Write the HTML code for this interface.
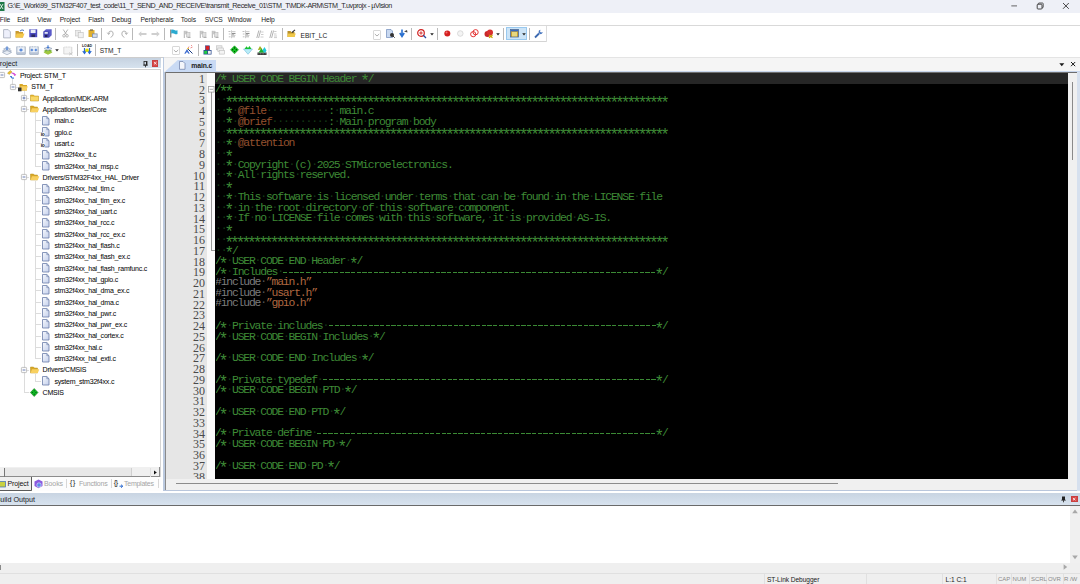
<!DOCTYPE html><html><head><meta charset="utf-8"><style>
*{margin:0;padding:0;box-sizing:border-box}
html,body{width:1080px;height:584px;overflow:hidden;background:#fff;font-family:"Liberation Sans",sans-serif}
.a{position:absolute}
svg.a{overflow:visible}
.t{white-space:pre;line-height:1.2}
.ln{position:absolute;left:0;width:39px;text-align:right;font-family:"Liberation Serif",serif;font-size:12px;line-height:10.75px;color:#4a4a4a}
.cl{position:absolute;left:-0.6px;white-space:pre;font-family:"Liberation Mono",monospace;font-size:11.4px;letter-spacing:-1.18px;line-height:10.75px;color:#3e8a36}
.dot{color:#143a16;position:relative;top:-1px}
.dotg{color:#555;position:relative;top:-1px}
.star{font-size:16px;letter-spacing:-3.94px;position:relative;top:4.6px;left:-1.9px}
.tag{color:#93502e}
.dash{display:inline-block;height:1px;background:repeating-linear-gradient(90deg,#3b8a35 0 4.3px,transparent 4.3px 5.66px);vertical-align:top;position:relative;top:5.5px;left:0.4px}
.pp{color:#7c7c7c}
.str{color:#b06840}
</style></head><body><svg width="0" height="0" style="position:absolute"><defs><linearGradient id="fg" x1="0" y1="0" x2="1" y2="1"><stop offset="0" stop-color="#f6f8fc"/><stop offset="1" stop-color="#c4d0ec"/></linearGradient></defs></svg><div class="a" style="left:0px;top:0px;width:1080px;height:12.5px;background:#eef0f7"></div><svg class="a" style="left:0px;top:2px" width="5" height="9" viewBox="0 0 5 9"><rect x="-4" y="0" width="8.5" height="9" fill="#1f7a48"/><path d="M0 2 L3 7 M3 2 L0 7" stroke="#fff" stroke-width="0.8"/></svg><div class="a t" style="left:7.4px;top:1.6px;font-size:7.2px;letter-spacing:-0.42px;color:#2a2a2a">G:\E_Work\99_STM32F407_test_code\11_T_SEND_AND_RECEIVE\transmit_Receive_01\STM_T\MDK-ARM\STM_T.uvprojx - µVision</div><svg class="a" style="left:1010px;top:3px" width="9" height="6" viewBox="0 0 9 6"><path d="M1.3 2.9 H7" stroke="#555" stroke-width="0.9"/></svg><svg class="a" style="left:1036px;top:2px" width="9" height="8" viewBox="0 0 9 8"><rect x="1.2" y="2.2" width="4.8" height="4.8" rx="0.8" fill="none" stroke="#333" stroke-width="0.9"/><path d="M2.4 2.2 V1.6 Q2.4 1 3 1 H6.5 Q7.2 1 7.2 1.7 V5 Q7.2 5.8 6.5 5.8 H6" fill="none" stroke="#333" stroke-width="0.8"/></svg><svg class="a" style="left:1062px;top:2px" width="8" height="8" viewBox="0 0 8 8"><path d="M1 1 L6.8 6.8 M6.8 1 L1 6.8" stroke="#333" stroke-width="0.9"/></svg><div class="a" style="left:0px;top:12.5px;width:1080px;height:12.8px;background:#fff"></div><div class="a" style="left:0px;top:25px;width:1080px;height:1px;background:#d9d9d9"></div><div class="a t" style="left:-0.3px;top:15.6px;font-size:6.7px;color:#1a1a1a;letter-spacing:-0.05px">File</div><div class="a t" style="left:17.2px;top:15.6px;font-size:6.7px;color:#1a1a1a;letter-spacing:-0.05px">Edit</div><div class="a t" style="left:37.2px;top:15.6px;font-size:6.7px;color:#1a1a1a;letter-spacing:-0.05px">View</div><div class="a t" style="left:59.7px;top:15.6px;font-size:6.7px;color:#1a1a1a;letter-spacing:-0.05px">Project</div><div class="a t" style="left:88.2px;top:15.6px;font-size:6.7px;color:#1a1a1a;letter-spacing:-0.05px">Flash</div><div class="a t" style="left:111.7px;top:15.6px;font-size:6.7px;color:#1a1a1a;letter-spacing:-0.05px">Debug</div><div class="a t" style="left:140.4px;top:15.6px;font-size:6.7px;color:#1a1a1a;letter-spacing:-0.05px">Peripherals</div><div class="a t" style="left:180.7px;top:15.6px;font-size:6.7px;color:#1a1a1a;letter-spacing:-0.05px">Tools</div><div class="a t" style="left:204.7px;top:15.6px;font-size:6.7px;color:#1a1a1a;letter-spacing:-0.05px">SVCS</div><div class="a t" style="left:227.7px;top:15.6px;font-size:6.7px;color:#1a1a1a;letter-spacing:-0.05px">Window</div><div class="a t" style="left:261.2px;top:15.6px;font-size:6.7px;color:#1a1a1a;letter-spacing:-0.05px">Help</div><div class="a" style="left:0px;top:26px;width:1080px;height:31px;background:#fff"></div><div class="a" style="left:0px;top:41.2px;width:546px;height:0.9px;background:#d4d4d4"></div><div class="a" style="left:546px;top:26px;width:0.9px;height:15.5px;background:#dcdcdc"></div><div class="a" style="left:0px;top:56.6px;width:269px;height:1px;background:#cdcdcd"></div><div class="a" style="left:269px;top:57.2px;width:811px;height:1px;background:#dedede"></div><div class="a" style="left:268.2px;top:41.5px;width:1.6px;height:15.5px;background:#eeeeee"></div><div class="a" style="left:55.3px;top:28.2px;width:0.9px;height:12px;background:#b9b9b9"></div><div class="a" style="left:100.5px;top:28.2px;width:0.9px;height:12px;background:#b9b9b9"></div><div class="a" style="left:132.3px;top:28.2px;width:0.9px;height:12px;background:#b9b9b9"></div><div class="a" style="left:163.7px;top:28.2px;width:0.9px;height:12px;background:#b9b9b9"></div><div class="a" style="left:222.6px;top:28.2px;width:0.9px;height:12px;background:#b9b9b9"></div><div class="a" style="left:281.5px;top:28.2px;width:0.9px;height:12px;background:#b9b9b9"></div><div class="a" style="left:411px;top:28.2px;width:0.9px;height:12px;background:#b9b9b9"></div><div class="a" style="left:437px;top:28.2px;width:0.9px;height:12px;background:#b9b9b9"></div><div class="a" style="left:503px;top:28.2px;width:0.9px;height:12px;background:#b9b9b9"></div><div class="a" style="left:528.5px;top:28.2px;width:0.9px;height:12px;background:#b9b9b9"></div><div class="a" style="left:77px;top:43.5px;width:0.9px;height:12px;background:#b9b9b9"></div><div class="a" style="left:94.8px;top:43.5px;width:0.9px;height:12px;background:#b9b9b9"></div><div class="a" style="left:197.5px;top:43.5px;width:0.9px;height:12px;background:#b9b9b9"></div><svg class="a" style="left:2.5px;top:28.8px" width="8" height="9.5" viewBox="0 0 8 9.5"><path d="M0.6 0.6 H5.2 L7.4 2.8 V8.9 H0.6 Z" fill="#eef0fb" stroke="#9aa0b0" stroke-width="0.7"/></svg><svg class="a" style="left:15px;top:28.8px" width="10" height="9" viewBox="0 0 10 9"><path d="M0.5 2 H3.5 L4.3 3 H8 V8.5 H0.5Z" fill="#c89a30"/><path d="M1.5 4.5 H9.5 L8 8.5 H0.5Z" fill="#f4c84a"/><path d="M5 2 Q7 0 9 1.5" stroke="#3a6ab8" stroke-width="0.9" fill="none"/></svg><svg class="a" style="left:29px;top:29.3px" width="8.5" height="8.5" viewBox="0 0 8.5 8.5"><rect x="0.3" y="0.3" width="7.9" height="7.9" fill="#4a4ac0"/><rect x="1.6" y="0.6" width="5" height="3.4" fill="#e8ecf8"/><rect x="2.4" y="5.4" width="3.6" height="2.6" fill="#2a2a60"/></svg><svg class="a" style="left:43px;top:29.1px" width="9" height="8.7" viewBox="0 0 9 8.7"><path d="M0.5 2.5 L3 0.3 H8.7 V6.3 L6.2 8.5 H0.5Z" fill="#5a5ac8"/><rect x="0.5" y="2.5" width="5.7" height="6" fill="#4646b0"/><rect x="1.6" y="3" width="3.2" height="1.8" fill="#dfe4f6"/><rect x="2" y="6" width="2.4" height="2" fill="#22225a"/></svg><svg class="a" style="left:62px;top:29.3px" width="7" height="8.5" viewBox="0 0 7 8.5"><path d="M1.2 0.5 L4.5 5.5 M5.8 0.5 L2.5 5.5" stroke="#a8a8a8" stroke-width="0.9"/><circle cx="2" cy="6.8" r="1.3" fill="none" stroke="#a8a8a8" stroke-width="0.8"/><circle cx="5" cy="6.8" r="1.3" fill="none" stroke="#a8a8a8" stroke-width="0.8"/></svg><svg class="a" style="left:74.5px;top:29.8px" width="9" height="8" viewBox="0 0 9 8"><rect x="0.5" y="0.5" width="5" height="5.5" fill="#ececec" stroke="#c4c4c4" stroke-width="0.6"/><rect x="3.2" y="2.5" width="5" height="5.3" fill="#f2f2f2" stroke="#bdbdbd" stroke-width="0.6"/></svg><svg class="a" style="left:88px;top:29.1px" width="10" height="9" viewBox="0 0 10 9"><rect x="0.5" y="1" width="6" height="7" fill="#e0b030"/><rect x="2" y="0.3" width="3" height="1.6" fill="#8a7a50"/><rect x="4" y="4.5" width="5.5" height="4.2" fill="#7a8aa8"/><rect x="4.8" y="5.3" width="4" height="2.6" fill="#d8e0ee"/></svg><svg class="a" style="left:106.5px;top:29.8px" width="7" height="8" viewBox="0 0 7 8"><path d="M1.5 4 Q1.5 1 4 1 Q6.2 1.2 6.2 4 Q6 6.5 3.6 7.4" stroke="#b4b4b4" stroke-width="1" fill="none"/><path d="M0.2 2.6 L1.6 4.6 L3 2.8" stroke="#b4b4b4" stroke-width="0.9" fill="none"/></svg><svg class="a" style="left:120.5px;top:29.8px" width="7" height="8" viewBox="0 0 7 8"><path d="M5.5 4 Q5.5 1 3 1 Q0.8 1.2 0.8 4 Q1 6.5 3.4 7.4" stroke="#b4b4b4" stroke-width="1" fill="none"/><path d="M6.8 2.6 L5.4 4.6 L4 2.8" stroke="#b4b4b4" stroke-width="0.9" fill="none"/></svg><svg class="a" style="left:137.5px;top:30.8px" width="9" height="6" viewBox="0 0 9 6"><path d="M0.3 3 L3.3 0.3 V1.9 H8.5 V4.1 H3.3 V5.7Z" fill="#cfcfcf"/></svg><svg class="a" style="left:150.5px;top:30.8px" width="9" height="6" viewBox="0 0 9 6"><path d="M8.7 3 L5.7 0.3 V1.9 H0.5 V4.1 H5.7 V5.7Z" fill="#cfcfcf"/></svg><svg class="a" style="left:169.5px;top:29.3px" width="8" height="9" viewBox="0 0 8 9"><path d="M0.8 0.5 V8.5" stroke="#555" stroke-width="0.9"/><path d="M1.2 0.8 Q3 0 4.5 1 Q6 2 7.5 1.2 V5 Q6 5.8 4.5 4.8 Q3 3.8 1.2 4.6Z" fill="#2aaad0"/></svg><svg class="a" style="left:183px;top:29.6px" width="8" height="8.5" viewBox="0 0 8 8.5"><path d="M1.3 0.8 V8" stroke="#a8a8a8" stroke-width="0.9"/><path d="M1.6 1 Q3 0.3 4.5 1 V4.5 Q3 3.8 1.6 4.5Z" fill="#c8c8c8"/><rect x="3.5" y="2.5" width="3.5" height="4.5" fill="#e0e0e0" stroke="#b0b0b0" stroke-width="0.5"/><path d="M4.5 7.5 H7.5" stroke="#a0a0a0" stroke-width="0.8"/></svg><svg class="a" style="left:198.5px;top:29.6px" width="8" height="8.5" viewBox="0 0 8 8.5"><path d="M1.3 0.8 V8" stroke="#a8a8a8" stroke-width="0.9"/><path d="M1.6 1 Q3 0.3 4.5 1 V4.5 Q3 3.8 1.6 4.5Z" fill="#c8c8c8"/><rect x="3.5" y="2.5" width="3.5" height="4.5" fill="#e0e0e0" stroke="#b0b0b0" stroke-width="0.5"/><path d="M4.5 7.5 H7.5" stroke="#a0a0a0" stroke-width="0.8"/></svg><svg class="a" style="left:211px;top:29.6px" width="8" height="8.5" viewBox="0 0 8 8.5"><path d="M1.3 0.8 V8" stroke="#a8a8a8" stroke-width="0.9"/><path d="M1.6 1 Q3 0.3 4.5 1 V4.5 Q3 3.8 1.6 4.5Z" fill="#c8c8c8"/><rect x="3.5" y="2.5" width="3.5" height="4.5" fill="#e0e0e0" stroke="#b0b0b0" stroke-width="0.5"/><path d="M4.5 7.5 H7.5" stroke="#a0a0a0" stroke-width="0.8"/></svg><svg class="a" style="left:228px;top:29.8px" width="8" height="8.5" viewBox="0 0 8 8.5"><path d="M3.5 0.3 V8.2" stroke="#b8b8b8" stroke-width="0.7"/><path d="M4 1.5 H7.5 M4 5.5 H7.5" stroke="#c8c8c8" stroke-width="0.9"/><path d="M4 3.5 H7.5" stroke="#909090" stroke-width="1.2"/><path d="M4 4.6 H6 M4 6.8 H7" stroke="#a8a8a8" stroke-width="0.8"/><path d="M0.5 1.5 H2.5 M0.8 4 H2.5 M0.8 6.8 H2.5" stroke="#b0b0b0" stroke-width="0.8"/></svg><svg class="a" style="left:241.5px;top:29.8px" width="8" height="8.5" viewBox="0 0 8 8.5"><path d="M3.5 0.3 V8.2" stroke="#b8b8b8" stroke-width="0.7"/><path d="M4 1.5 H7.5 M4 5.5 H7.5" stroke="#c8c8c8" stroke-width="0.9"/><path d="M4 3.5 H7.5" stroke="#909090" stroke-width="1.2"/><path d="M4 4.6 H6 M4 6.8 H7" stroke="#a8a8a8" stroke-width="0.8"/><path d="M0.5 1.5 H2.5 M0.8 4 H2.5 M0.8 6.8 H2.5" stroke="#b0b0b0" stroke-width="0.8"/></svg><svg class="a" style="left:255.5px;top:29.8px" width="8" height="8.5" viewBox="0 0 8 8.5"><path d="M2.8 0.5 L0.8 8 M4.6 0.5 L2.6 8" stroke="#a0a0a0" stroke-width="0.8"/><path d="M5.2 2 H7.5 M5 4.5 H7.5 M4.5 7 H7.5" stroke="#b8b8b8" stroke-width="0.7"/></svg><svg class="a" style="left:269px;top:29.8px" width="9" height="8.5" viewBox="0 0 9 8.5"><path d="M2.8 0.5 L0.8 8 M4.6 0.5 L2.6 8" stroke="#a0a0a0" stroke-width="0.8"/><path d="M5.2 1.5 H7.5 M5 4 H7.5 M5 6 H8 M5 7.6 H8" stroke="#b8b8b8" stroke-width="0.7"/></svg><svg class="a" style="left:287px;top:29.3px" width="9" height="8.5" viewBox="0 0 9 8.5"><path d="M0.5 2 H3.5 L4.3 3 H7.5 V8 H0.5Z" fill="#b8902a"/><path d="M0.8 4.5 H8.8 L7.5 8 H0.5Z" fill="#f0c848"/><path d="M5 3.5 L8 0.8" stroke="#333" stroke-width="1.1"/></svg><div class="a t" style="left:300.5px;top:31.8px;font-size:6.6px;color:#1a1a1a">EBIT_LC</div><div class="a" style="left:372.8px;top:30px;width:8.4px;height:9.5px;border:0.8px solid #d8d8d8;background:#fff;border-radius:1px"></div><svg class="a" style="left:374px;top:32.5px" width="6" height="4" viewBox="0 0 6 4"><path d="M0.8 1 L3 3 L5.2 1" stroke="#777" stroke-width="0.6" fill="none"/></svg><svg class="a" style="left:386px;top:29.1px" width="9" height="9" viewBox="0 0 9 9"><path d="M0.5 0.5 H5 L6.5 2 V8.5 H0.5Z" fill="#c8d8f0" stroke="#5a7ab0" stroke-width="0.6"/><circle cx="6" cy="6" r="2" fill="#333"/><path d="M6.5 6.5 L8.7 8.7" stroke="#333" stroke-width="1"/></svg><svg class="a" style="left:399px;top:29.1px" width="9" height="9" viewBox="0 0 9 9"><path d="M3 0.5 V6 M0.8 4 L3 7.5 L5.2 4" stroke="#2a70d0" stroke-width="1.6" fill="none"/><path d="M5 2.5 L8 1 L8.5 3.5Z" fill="#444"/></svg><svg class="a" style="left:417px;top:28.8px" width="10" height="9.5" viewBox="0 0 10 9.5"><circle cx="4" cy="4" r="3.3" fill="#fff" stroke="#d02020" stroke-width="1.2"/><path d="M2.3 4 H5.7 M4 2.3 V5.7" stroke="#d02020" stroke-width="0.9"/><path d="M6.3 6.3 L9 9" stroke="#2a4aa0" stroke-width="1.3"/></svg><svg class="a" style="left:429.5px;top:33px" width="4" height="3" viewBox="0 0 4 3"><path d="M0.2 0.3 H3.8 L2 2.6Z" fill="#222"/></svg><svg class="a" style="left:444px;top:29.8px" width="7" height="7" viewBox="0 0 7 7"><circle cx="3.3" cy="3.5" r="3" fill="#d42020"/><circle cx="2.5" cy="2.5" r="1" fill="#f07070"/></svg><svg class="a" style="left:457px;top:29.8px" width="7" height="7" viewBox="0 0 7 7"><circle cx="3.3" cy="3.5" r="2.8" fill="#f4f4f4" stroke="#c8c8c8" stroke-width="0.6"/></svg><svg class="a" style="left:470px;top:29.3px" width="9" height="8.5" viewBox="0 0 9 8.5"><circle cx="3.2" cy="5.2" r="2.6" fill="none" stroke="#e02020" stroke-width="0.9"/><circle cx="5.6" cy="3.2" r="2.6" fill="none" stroke="#e02020" stroke-width="0.9"/></svg><svg class="a" style="left:484px;top:29.1px" width="10" height="9" viewBox="0 0 10 9"><circle cx="3.5" cy="5" r="3" fill="#c82828"/><circle cx="6" cy="3.5" r="3" fill="#d83030"/><path d="M5 6 L8.5 8.8 M8.5 6 L5 8.8" stroke="#c8a000" stroke-width="1.1"/></svg><svg class="a" style="left:495.8px;top:33px" width="4" height="3" viewBox="0 0 4 3"><path d="M0.2 0.3 H3.8 L2 2.6Z" fill="#222"/></svg><div class="a" style="left:506px;top:27.3px;width:21.2px;height:13px;background:#cce4f7;border:0.8px solid #99c9ef"></div><svg class="a" style="left:509.5px;top:29.3px" width="9" height="8.5" viewBox="0 0 9 8.5"><rect x="0.5" y="0.5" width="8" height="7.5" fill="#c9a030" stroke="#4a6aa0" stroke-width="0.8"/><rect x="0.9" y="0.9" width="7.2" height="1.5" fill="#3a6ac0"/><rect x="2" y="3" width="5" height="4.4" fill="#e8d880"/></svg><svg class="a" style="left:521.5px;top:33px" width="4" height="3" viewBox="0 0 4 3"><path d="M0.2 0.3 H3.8 L2 2.6Z" fill="#222"/></svg><svg class="a" style="left:534px;top:28.8px" width="9.5" height="9.5" viewBox="0 0 9.5 9.5"><path d="M1 8.5 L5 4.5" stroke="#3a68b0" stroke-width="1.8"/><path d="M4.5 3.5 Q4.3 1 6.5 0.7 L6 2.5 L7 3.5 L8.8 3 Q8.5 5.2 6 5.2Z" fill="#4a78c0"/></svg><svg class="a" style="left:2px;top:45.5px" width="10" height="9.5" viewBox="0 0 10 9.5"><path d="M0.5 5 L5 3 L9.5 5 L5 7Z" fill="#dfe5ef" stroke="#8090a8" stroke-width="0.5"/><path d="M0.5 6.5 L5 4.5 L9.5 6.5 L5 8.8Z" fill="#e8edf5" stroke="#8090a8" stroke-width="0.5"/><path d="M1.5 3 L5 1.3 L8.5 3 L5 4.8Z" fill="#f0f3f8" stroke="#8090a8" stroke-width="0.5"/><path d="M5 0.3 V3.5 M3.6 2.3 L5 3.6 L6.4 2.3" stroke="#2a6ad0" stroke-width="0.9" fill="none"/></svg><svg class="a" style="left:15.5px;top:45.5px" width="10" height="9" viewBox="0 0 10 9"><path d="M0.8 0.5 V8.3 H9.2 V0.5" stroke="#8a9ab0" stroke-width="0.8" fill="#eef2f8"/><path d="M1.5 0.8 H8.5" stroke="#8a9ab0" stroke-width="0.8" stroke-dasharray="1 0.6"/><rect x="0.8" y="6.2" width="8.4" height="2" fill="#b8c4d6"/><path d="M3.3 4 H6.7 M5 2.5 V5.5" stroke="#2a6ad0" stroke-width="1"/></svg><svg class="a" style="left:29px;top:45.5px" width="10" height="9" viewBox="0 0 10 9"><path d="M0.8 0.5 V8.3 H9.2 V0.5" stroke="#8a9ab0" stroke-width="0.8" fill="#eef2f8"/><path d="M1.5 0.8 H8.5" stroke="#8a9ab0" stroke-width="0.8" stroke-dasharray="1 0.6"/><rect x="0.8" y="6.2" width="8.4" height="2" fill="#b8c4d6"/><path d="M1.6 4 H4.2 M2.9 2.7 V5.3 M5.6 4 H8.2 M6.9 2.7 V5.3" stroke="#2a6ad0" stroke-width="0.9"/></svg><svg class="a" style="left:43px;top:45px" width="10" height="10" viewBox="0 0 10 10"><path d="M0.5 6 L5 4 L9.5 6 L5 8.2Z" fill="#70b030"/><path d="M0.5 7.5 L5 5.5 L9.5 7.5 L5 9.7Z" fill="#a0c840"/><path d="M1 3.5 L5 1.8 L9 3.5 L5 5.5Z" fill="#d8dde8" stroke="#8090a8" stroke-width="0.5"/><path d="M5 0.2 V3.2 M3.8 2 L5 3.3 L6.2 2" stroke="#2a6ad0" stroke-width="0.9" fill="none"/></svg><svg class="a" style="left:55px;top:49.3px" width="4" height="3" viewBox="0 0 4 3"><path d="M0.2 0.3 H3.8 L2 2.6Z" fill="#222"/></svg><svg class="a" style="left:63px;top:45.5px" width="10" height="9.5" viewBox="0 0 10 9.5"><path d="M0.8 1 V8 H8.8 V1" stroke="#c8c8c8" stroke-width="0.7" fill="#f4f4f4"/><path d="M1.5 1 H8.3" stroke="#c8c8c8" stroke-width="0.8" stroke-dasharray="1 0.6"/><path d="M6 6.5 L9.5 9.2 M9.5 6.5 L6 9.2" stroke="#c0c0c0" stroke-width="0.7"/></svg><svg class="a" style="left:81.5px;top:44px" width="10" height="11" viewBox="0 0 10 11"><text x="5" y="3.3" font-size="3.6" font-family="Liberation Sans" font-weight="bold" text-anchor="middle" fill="#222">LOAD</text><path d="M2.5 4 V8.5 M0.8 7 L2.5 9.5 L4.2 7 M7.5 4 V8.5 M5.8 7 L7.5 9.5 L9.2 7" stroke="#2a6ad0" stroke-width="1.2" fill="none"/><circle cx="5" cy="6.3" r="1.8" fill="#e0e000"/></svg><div class="a t" style="left:99.7px;top:47.2px;font-size:6.6px;color:#1a1a1a">STM_T</div><div class="a" style="left:172px;top:45.8px;width:8.4px;height:9.5px;border:0.8px solid #d8d8d8;background:#fff;border-radius:1px"></div><svg class="a" style="left:173.2px;top:48.5px" width="6" height="4" viewBox="0 0 6 4"><path d="M0.8 1 L3 3 L5.2 1" stroke="#777" stroke-width="0.6" fill="none"/></svg><svg class="a" style="left:184px;top:45px" width="10" height="10" viewBox="0 0 10 10"><path d="M0.8 8.8 L3 5 L5.2 8.8 M1.8 7 H4.2" stroke="#3a6ad0" stroke-width="1.1" fill="none"/><path d="M4 4 L8.5 8.5" stroke="#1a3a80" stroke-width="1"/><path d="M4 3.5 L5 1.5 M6.5 3 L8.5 2 M7 0.8 L8 0.3" stroke="#e04040" stroke-width="0.6"/><circle cx="4" cy="3.6" r="0.8" fill="#e8c020"/></svg><svg class="a" style="left:203px;top:45px" width="9" height="10" viewBox="0 0 9 10"><rect x="0.5" y="5" width="8" height="4.5" fill="#2a4a90"/><rect x="1.2" y="5.8" width="3" height="3" fill="#20d040"/><rect x="5" y="5.8" width="2.8" height="3" fill="#f0f0f0"/><rect x="2.4" y="0.8" width="4.2" height="4.2" fill="#e02020" stroke="#2a4a90" stroke-width="0.6"/></svg><svg class="a" style="left:216px;top:45px" width="9" height="10" viewBox="0 0 9 10"><rect x="0.5" y="0.8" width="5.5" height="4" fill="#ececec" stroke="#bbb" stroke-width="0.6"/><rect x="1.8" y="3" width="5.5" height="3.5" fill="#f0f0f0" stroke="#bbb" stroke-width="0.6"/><rect x="3.2" y="5.3" width="5.3" height="3.8" fill="#f4f4f4" stroke="#bbb" stroke-width="0.6"/></svg><svg class="a" style="left:230px;top:45px" width="9" height="10" viewBox="0 0 9 10"><path d="M4.5 0.8 L8.5 4.8 L4.5 8.8 L0.5 4.8Z" fill="#10d020" stroke="#0a7a10" stroke-width="0.5"/><circle cx="4.5" cy="3" r="0.7" fill="#0a2a0a"/><circle cx="4.5" cy="6.6" r="0.7" fill="#0a2a0a"/><circle cx="2.7" cy="4.8" r="0.7" fill="#0a2a0a"/><circle cx="6.3" cy="4.8" r="0.7" fill="#0a2a0a"/></svg><svg class="a" style="left:243px;top:45px" width="10" height="10" viewBox="0 0 10 10"><path d="M0.5 4 H9.5 L5 9.3Z" fill="#b8ecf8" stroke="#5ab0d0" stroke-width="0.5"/><path d="M1.5 4 L3.5 1.2 L5 3 L6.5 1 L8.5 4Z" fill="#18c030"/></svg><svg class="a" style="left:257px;top:44.5px" width="10" height="10.5" viewBox="0 0 10 10.5"><rect x="0.5" y="7.5" width="9" height="2.5" fill="#333"/><path d="M0.8 5 L3 1 L5.5 4.5Z" fill="#a0b020"/><path d="M5 6 L7.5 2 L9.5 5.5 L8 8Z" fill="#20c8d8"/><path d="M1.5 7.5 L4.5 3.5 L7 7.5Z" fill="#18b030"/><path d="M1.5 8.8 H8.5" stroke="#fff" stroke-width="0.5" stroke-dasharray="0.8 0.8"/></svg><div class="a" style="left:0px;top:57.5px;width:160.8px;height:10px;background:linear-gradient(#c6d2e0,#d6e2ee)"></div><div class="a" style="left:0px;top:67.5px;width:160.8px;height:1.6px;background:#fff"></div><div class="a" style="left:0px;top:69.1px;width:160.5px;height:0.9px;background:#d0d0d0"></div><div class="a t" style="left:-5px;top:59.8px;font-size:7.2px;color:#1a1a1a">Project</div><svg class="a" style="left:142.5px;top:60.5px" width="5" height="6.5" viewBox="0 0 5 6.5"><rect x="1" y="0.5" width="3" height="3.5" fill="none" stroke="#222" stroke-width="0.8"/><path d="M0.3 4.2 H4.7 M2.5 4.2 V6.3" stroke="#222" stroke-width="0.8"/><rect x="3" y="0.5" width="1" height="3.5" fill="#222"/></svg><div class="a" style="left:151.8px;top:60.4px;width:6.6px;height:6.4px;background:#d84848;border:0.5px solid #c84040"></div><svg class="a" style="left:151.8px;top:60.4px" width="6.6" height="6.4" viewBox="0 0 6.6 6.4"><path d="M2 2 L4.6 4.4 M4.6 2 L2 4.4" stroke="#fff" stroke-width="0.8"/></svg><div class="a" style="left:0px;top:70px;width:160.5px;height:397.2px;background:#fff"></div><div class="a" style="left:160px;top:69.1px;width:0.9px;height:408px;background:#d4d4d4"></div><div class="a" style="left:12.2px;top:78.2px;width:0.8px;height:6.32px;background:#dcdcdc"></div><div class="a" style="left:23.7px;top:89.52px;width:0.8px;height:302.64px;background:#dcdcdc"></div><div class="a" style="left:35.3px;top:113.16px;width:0.8px;height:52.6px;background:#dcdcdc"></div><div class="a" style="left:35.3px;top:120.48px;width:6px;height:0.8px;background:#dcdcdc"></div><div class="a" style="left:35.3px;top:131.8px;width:6px;height:0.8px;background:#dcdcdc"></div><div class="a" style="left:35.3px;top:143.12px;width:6px;height:0.8px;background:#dcdcdc"></div><div class="a" style="left:35.3px;top:154.44px;width:6px;height:0.8px;background:#dcdcdc"></div><div class="a" style="left:35.3px;top:165.76px;width:6px;height:0.8px;background:#dcdcdc"></div><div class="a" style="left:35.3px;top:181.08px;width:0.8px;height:177.12px;background:#dcdcdc"></div><div class="a" style="left:35.3px;top:188.4px;width:6px;height:0.8px;background:#dcdcdc"></div><div class="a" style="left:35.3px;top:199.72px;width:6px;height:0.8px;background:#dcdcdc"></div><div class="a" style="left:35.3px;top:211.04px;width:6px;height:0.8px;background:#dcdcdc"></div><div class="a" style="left:35.3px;top:222.36px;width:6px;height:0.8px;background:#dcdcdc"></div><div class="a" style="left:35.3px;top:233.68px;width:6px;height:0.8px;background:#dcdcdc"></div><div class="a" style="left:35.3px;top:245px;width:6px;height:0.8px;background:#dcdcdc"></div><div class="a" style="left:35.3px;top:256.32px;width:6px;height:0.8px;background:#dcdcdc"></div><div class="a" style="left:35.3px;top:267.64px;width:6px;height:0.8px;background:#dcdcdc"></div><div class="a" style="left:35.3px;top:278.96px;width:6px;height:0.8px;background:#dcdcdc"></div><div class="a" style="left:35.3px;top:290.28px;width:6px;height:0.8px;background:#dcdcdc"></div><div class="a" style="left:35.3px;top:301.6px;width:6px;height:0.8px;background:#dcdcdc"></div><div class="a" style="left:35.3px;top:312.92px;width:6px;height:0.8px;background:#dcdcdc"></div><div class="a" style="left:35.3px;top:324.24px;width:6px;height:0.8px;background:#dcdcdc"></div><div class="a" style="left:35.3px;top:335.56px;width:6px;height:0.8px;background:#dcdcdc"></div><div class="a" style="left:35.3px;top:346.88px;width:6px;height:0.8px;background:#dcdcdc"></div><div class="a" style="left:35.3px;top:358.2px;width:6px;height:0.8px;background:#dcdcdc"></div><div class="a" style="left:35.3px;top:373.52px;width:0.8px;height:7.32px;background:#dcdcdc"></div><div class="a" style="left:35.3px;top:380.84px;width:6px;height:0.8px;background:#dcdcdc"></div><div class="a" style="left:13px;top:86.52px;width:5px;height:0.8px;background:#dcdcdc"></div><div class="a" style="left:24px;top:97.84px;width:5px;height:0.8px;background:#dcdcdc"></div><div class="a" style="left:24px;top:109.16px;width:5px;height:0.8px;background:#dcdcdc"></div><div class="a" style="left:24px;top:177.08px;width:5px;height:0.8px;background:#dcdcdc"></div><div class="a" style="left:24px;top:369.52px;width:5px;height:0.8px;background:#dcdcdc"></div><div class="a" style="left:24px;top:392.16px;width:5px;height:0.8px;background:#dcdcdc"></div><div class="a t" style="left:20px;top:72.1px;font-size:7px;letter-spacing:-0.2px;color:#0a0a0a;-webkit-text-stroke:0.05px #0a0a0a">Project: STM_T</div><svg class="a" style="left:-1.2px;top:72.2px" width="6" height="6" viewBox="0 0 6 6"><rect x="0.4" y="0.4" width="5.2" height="5.2" rx="0.8" fill="#fbfbfb" stroke="#a8a8a8" stroke-width="0.7"/><path d="M1.6 3 H4.4" stroke="#4a62a8" stroke-width="0.8"/></svg><svg class="a" style="left:6.5px;top:70.2px" width="9.5" height="9.5" viewBox="0 0 9.5 9.5"><path d="M0.5 3 L3.5 0.5 L5 2 L2 4.5Z" fill="#e8c030" stroke="#a88010" stroke-width="0.4"/><path d="M4.5 3 Q8 3 8 5.5" stroke="#d040d0" stroke-width="1.2" fill="none"/><path d="M7.8 5.5 L6.5 4.5 M7.8 5.5 L8.8 4.2" stroke="#d040d0" stroke-width="0.8"/><path d="M7 8 Q4 8.5 4 6" stroke="#3a7ad8" stroke-width="1.2" fill="none"/><path d="M4 6 L3 7 M4 6 L5 7" stroke="#3a7ad8" stroke-width="0.8"/></svg><div class="a t" style="left:31.3px;top:83.42px;font-size:7px;letter-spacing:-0.2px;color:#0a0a0a;-webkit-text-stroke:0.05px #0a0a0a">STM_T</div><svg class="a" style="left:10.1px;top:83.52px" width="6" height="6" viewBox="0 0 6 6"><rect x="0.4" y="0.4" width="5.2" height="5.2" rx="0.8" fill="#fbfbfb" stroke="#a8a8a8" stroke-width="0.7"/><path d="M1.6 3 H4.4" stroke="#4a62a8" stroke-width="0.8"/></svg><svg class="a" style="left:18px;top:82.52px" width="10" height="8.5" viewBox="0 0 10 8.5"><path d="M1.5 1 H4.5 L5.3 2 H9 V7.5 H1.5Z" fill="#d8a828"/><path d="M2.5 3.3 H9.8 L8.5 7.5 H1.5Z" fill="#f8d060"/><rect x="0" y="4.5" width="3.5" height="3.8" fill="#333"/></svg><div class="a t" style="left:42.6px;top:94.74px;font-size:7px;letter-spacing:-0.2px;color:#0a0a0a;-webkit-text-stroke:0.05px #0a0a0a">Application/MDK-ARM</div><svg class="a" style="left:21.4px;top:94.84px" width="6" height="6" viewBox="0 0 6 6"><rect x="0.4" y="0.4" width="5.2" height="5.2" rx="0.8" fill="#fbfbfb" stroke="#a8a8a8" stroke-width="0.7"/><path d="M1.6 3 H4.4" stroke="#4a62a8" stroke-width="0.8"/><path d="M3 1.6 V4.4" stroke="#4a62a8" stroke-width="0.8"/></svg><svg class="a" style="left:30px;top:94.04px" width="9" height="7.5" viewBox="0 0 9 7.5"><path d="M0.5 1 H3.5 L4.3 2 H8.5 V7 H0.5Z" fill="#e8b830" stroke="#b8901c" stroke-width="0.5"/><rect x="0.9" y="2.6" width="7.2" height="4" fill="#f8d868"/></svg><div class="a t" style="left:42.6px;top:106.06px;font-size:7px;letter-spacing:-0.2px;color:#0a0a0a;-webkit-text-stroke:0.05px #0a0a0a">Application/User/Core</div><svg class="a" style="left:21.4px;top:106.16px" width="6" height="6" viewBox="0 0 6 6"><rect x="0.4" y="0.4" width="5.2" height="5.2" rx="0.8" fill="#fbfbfb" stroke="#a8a8a8" stroke-width="0.7"/><path d="M1.6 3 H4.4" stroke="#4a62a8" stroke-width="0.8"/></svg><svg class="a" style="left:30px;top:105.36px" width="9.5" height="7.5" viewBox="0 0 9.5 7.5"><path d="M0.5 1 H3.5 L4.3 2 H7.5 V7 H0.5Z" fill="#d8a828" stroke="#b8901c" stroke-width="0.5"/><path d="M2 3.3 H9.3 L7.8 7 H0.5Z" fill="#f8d060"/></svg><div class="a t" style="left:54.4px;top:117.38px;font-size:7px;letter-spacing:-0.2px;color:#0a0a0a;-webkit-text-stroke:0.05px #0a0a0a">main.c</div><svg class="a" style="left:42px;top:115.68px" width="7.5" height="9.5" viewBox="0 0 7.5 9.5"><path d="M0.5 0.5 H4.8 L7 2.7 V9 H0.5Z" fill="url(#fg)" stroke="#6a7ca8" stroke-width="0.8"/><path d="M4.8 0.5 V2.7 H7" fill="none" stroke="#6a7ca8" stroke-width="0.6"/></svg><div class="a t" style="left:54.4px;top:128.7px;font-size:7px;letter-spacing:-0.2px;color:#0a0a0a;-webkit-text-stroke:0.05px #0a0a0a">gpio.c</div><svg class="a" style="left:42px;top:127px" width="7.5" height="9.5" viewBox="0 0 7.5 9.5"><path d="M0.5 0.5 H4.8 L7 2.7 V9 H0.5Z" fill="url(#fg)" stroke="#6a7ca8" stroke-width="0.8"/><path d="M4.8 0.5 V2.7 H7" fill="none" stroke="#6a7ca8" stroke-width="0.6"/></svg><svg class="a" style="left:40px;top:132.1px" width="6" height="5" viewBox="0 0 6 5"><rect x="0.3" y="0.3" width="4.8" height="4.4" fill="#fff" opacity="0.9"/><text x="2.7" y="4.4" font-size="5" font-family="Liberation Sans" font-weight="bold" text-anchor="middle" fill="#111" letter-spacing="-0.3">io</text></svg><div class="a t" style="left:54.4px;top:140.02px;font-size:7px;letter-spacing:-0.2px;color:#0a0a0a;-webkit-text-stroke:0.05px #0a0a0a">usart.c</div><svg class="a" style="left:42px;top:138.32px" width="7.5" height="9.5" viewBox="0 0 7.5 9.5"><path d="M0.5 0.5 H4.8 L7 2.7 V9 H0.5Z" fill="url(#fg)" stroke="#6a7ca8" stroke-width="0.8"/><path d="M4.8 0.5 V2.7 H7" fill="none" stroke="#6a7ca8" stroke-width="0.6"/></svg><svg class="a" style="left:40px;top:143.42px" width="6" height="5" viewBox="0 0 6 5"><rect x="0.3" y="0.3" width="4.8" height="4.4" fill="#fff" opacity="0.9"/><text x="2.7" y="4.4" font-size="5" font-family="Liberation Sans" font-weight="bold" text-anchor="middle" fill="#111" letter-spacing="-0.3">io</text></svg><div class="a t" style="left:54.4px;top:151.34px;font-size:7px;letter-spacing:-0.2px;color:#0a0a0a;-webkit-text-stroke:0.05px #0a0a0a">stm32f4xx_it.c</div><svg class="a" style="left:42px;top:149.64px" width="7.5" height="9.5" viewBox="0 0 7.5 9.5"><path d="M0.5 0.5 H4.8 L7 2.7 V9 H0.5Z" fill="url(#fg)" stroke="#6a7ca8" stroke-width="0.8"/><path d="M4.8 0.5 V2.7 H7" fill="none" stroke="#6a7ca8" stroke-width="0.6"/></svg><div class="a t" style="left:54.4px;top:162.66px;font-size:7px;letter-spacing:-0.2px;color:#0a0a0a;-webkit-text-stroke:0.05px #0a0a0a">stm32f4xx_hal_msp.c</div><svg class="a" style="left:42px;top:160.96px" width="7.5" height="9.5" viewBox="0 0 7.5 9.5"><path d="M0.5 0.5 H4.8 L7 2.7 V9 H0.5Z" fill="url(#fg)" stroke="#6a7ca8" stroke-width="0.8"/><path d="M4.8 0.5 V2.7 H7" fill="none" stroke="#6a7ca8" stroke-width="0.6"/></svg><div class="a t" style="left:42.6px;top:173.98px;font-size:7px;letter-spacing:-0.2px;color:#0a0a0a;-webkit-text-stroke:0.05px #0a0a0a">Drivers/STM32F4xx_HAL_Driver</div><svg class="a" style="left:21.4px;top:174.08px" width="6" height="6" viewBox="0 0 6 6"><rect x="0.4" y="0.4" width="5.2" height="5.2" rx="0.8" fill="#fbfbfb" stroke="#a8a8a8" stroke-width="0.7"/><path d="M1.6 3 H4.4" stroke="#4a62a8" stroke-width="0.8"/></svg><svg class="a" style="left:30px;top:173.28px" width="9.5" height="7.5" viewBox="0 0 9.5 7.5"><path d="M0.5 1 H3.5 L4.3 2 H7.5 V7 H0.5Z" fill="#d8a828" stroke="#b8901c" stroke-width="0.5"/><path d="M2 3.3 H9.3 L7.8 7 H0.5Z" fill="#f8d060"/></svg><div class="a t" style="left:54.4px;top:185.3px;font-size:7px;letter-spacing:-0.2px;color:#0a0a0a;-webkit-text-stroke:0.05px #0a0a0a">stm32f4xx_hal_tim.c</div><svg class="a" style="left:42px;top:183.6px" width="7.5" height="9.5" viewBox="0 0 7.5 9.5"><path d="M0.5 0.5 H4.8 L7 2.7 V9 H0.5Z" fill="url(#fg)" stroke="#6a7ca8" stroke-width="0.8"/><path d="M4.8 0.5 V2.7 H7" fill="none" stroke="#6a7ca8" stroke-width="0.6"/></svg><div class="a t" style="left:54.4px;top:196.62px;font-size:7px;letter-spacing:-0.2px;color:#0a0a0a;-webkit-text-stroke:0.05px #0a0a0a">stm32f4xx_hal_tim_ex.c</div><svg class="a" style="left:42px;top:194.92px" width="7.5" height="9.5" viewBox="0 0 7.5 9.5"><path d="M0.5 0.5 H4.8 L7 2.7 V9 H0.5Z" fill="url(#fg)" stroke="#6a7ca8" stroke-width="0.8"/><path d="M4.8 0.5 V2.7 H7" fill="none" stroke="#6a7ca8" stroke-width="0.6"/></svg><div class="a t" style="left:54.4px;top:207.94px;font-size:7px;letter-spacing:-0.2px;color:#0a0a0a;-webkit-text-stroke:0.05px #0a0a0a">stm32f4xx_hal_uart.c</div><svg class="a" style="left:42px;top:206.24px" width="7.5" height="9.5" viewBox="0 0 7.5 9.5"><path d="M0.5 0.5 H4.8 L7 2.7 V9 H0.5Z" fill="url(#fg)" stroke="#6a7ca8" stroke-width="0.8"/><path d="M4.8 0.5 V2.7 H7" fill="none" stroke="#6a7ca8" stroke-width="0.6"/></svg><div class="a t" style="left:54.4px;top:219.26px;font-size:7px;letter-spacing:-0.2px;color:#0a0a0a;-webkit-text-stroke:0.05px #0a0a0a">stm32f4xx_hal_rcc.c</div><svg class="a" style="left:42px;top:217.56px" width="7.5" height="9.5" viewBox="0 0 7.5 9.5"><path d="M0.5 0.5 H4.8 L7 2.7 V9 H0.5Z" fill="url(#fg)" stroke="#6a7ca8" stroke-width="0.8"/><path d="M4.8 0.5 V2.7 H7" fill="none" stroke="#6a7ca8" stroke-width="0.6"/></svg><div class="a t" style="left:54.4px;top:230.58px;font-size:7px;letter-spacing:-0.2px;color:#0a0a0a;-webkit-text-stroke:0.05px #0a0a0a">stm32f4xx_hal_rcc_ex.c</div><svg class="a" style="left:42px;top:228.88px" width="7.5" height="9.5" viewBox="0 0 7.5 9.5"><path d="M0.5 0.5 H4.8 L7 2.7 V9 H0.5Z" fill="url(#fg)" stroke="#6a7ca8" stroke-width="0.8"/><path d="M4.8 0.5 V2.7 H7" fill="none" stroke="#6a7ca8" stroke-width="0.6"/></svg><div class="a t" style="left:54.4px;top:241.9px;font-size:7px;letter-spacing:-0.2px;color:#0a0a0a;-webkit-text-stroke:0.05px #0a0a0a">stm32f4xx_hal_flash.c</div><svg class="a" style="left:42px;top:240.2px" width="7.5" height="9.5" viewBox="0 0 7.5 9.5"><path d="M0.5 0.5 H4.8 L7 2.7 V9 H0.5Z" fill="url(#fg)" stroke="#6a7ca8" stroke-width="0.8"/><path d="M4.8 0.5 V2.7 H7" fill="none" stroke="#6a7ca8" stroke-width="0.6"/></svg><div class="a t" style="left:54.4px;top:253.22px;font-size:7px;letter-spacing:-0.2px;color:#0a0a0a;-webkit-text-stroke:0.05px #0a0a0a">stm32f4xx_hal_flash_ex.c</div><svg class="a" style="left:42px;top:251.52px" width="7.5" height="9.5" viewBox="0 0 7.5 9.5"><path d="M0.5 0.5 H4.8 L7 2.7 V9 H0.5Z" fill="url(#fg)" stroke="#6a7ca8" stroke-width="0.8"/><path d="M4.8 0.5 V2.7 H7" fill="none" stroke="#6a7ca8" stroke-width="0.6"/></svg><div class="a t" style="left:54.4px;top:264.54px;font-size:7px;letter-spacing:-0.2px;color:#0a0a0a;-webkit-text-stroke:0.05px #0a0a0a">stm32f4xx_hal_flash_ramfunc.c</div><svg class="a" style="left:42px;top:262.84px" width="7.5" height="9.5" viewBox="0 0 7.5 9.5"><path d="M0.5 0.5 H4.8 L7 2.7 V9 H0.5Z" fill="url(#fg)" stroke="#6a7ca8" stroke-width="0.8"/><path d="M4.8 0.5 V2.7 H7" fill="none" stroke="#6a7ca8" stroke-width="0.6"/></svg><div class="a t" style="left:54.4px;top:275.86px;font-size:7px;letter-spacing:-0.2px;color:#0a0a0a;-webkit-text-stroke:0.05px #0a0a0a">stm32f4xx_hal_gpio.c</div><svg class="a" style="left:42px;top:274.16px" width="7.5" height="9.5" viewBox="0 0 7.5 9.5"><path d="M0.5 0.5 H4.8 L7 2.7 V9 H0.5Z" fill="url(#fg)" stroke="#6a7ca8" stroke-width="0.8"/><path d="M4.8 0.5 V2.7 H7" fill="none" stroke="#6a7ca8" stroke-width="0.6"/></svg><div class="a t" style="left:54.4px;top:287.18px;font-size:7px;letter-spacing:-0.2px;color:#0a0a0a;-webkit-text-stroke:0.05px #0a0a0a">stm32f4xx_hal_dma_ex.c</div><svg class="a" style="left:42px;top:285.48px" width="7.5" height="9.5" viewBox="0 0 7.5 9.5"><path d="M0.5 0.5 H4.8 L7 2.7 V9 H0.5Z" fill="url(#fg)" stroke="#6a7ca8" stroke-width="0.8"/><path d="M4.8 0.5 V2.7 H7" fill="none" stroke="#6a7ca8" stroke-width="0.6"/></svg><div class="a t" style="left:54.4px;top:298.5px;font-size:7px;letter-spacing:-0.2px;color:#0a0a0a;-webkit-text-stroke:0.05px #0a0a0a">stm32f4xx_hal_dma.c</div><svg class="a" style="left:42px;top:296.8px" width="7.5" height="9.5" viewBox="0 0 7.5 9.5"><path d="M0.5 0.5 H4.8 L7 2.7 V9 H0.5Z" fill="url(#fg)" stroke="#6a7ca8" stroke-width="0.8"/><path d="M4.8 0.5 V2.7 H7" fill="none" stroke="#6a7ca8" stroke-width="0.6"/></svg><div class="a t" style="left:54.4px;top:309.82px;font-size:7px;letter-spacing:-0.2px;color:#0a0a0a;-webkit-text-stroke:0.05px #0a0a0a">stm32f4xx_hal_pwr.c</div><svg class="a" style="left:42px;top:308.12px" width="7.5" height="9.5" viewBox="0 0 7.5 9.5"><path d="M0.5 0.5 H4.8 L7 2.7 V9 H0.5Z" fill="url(#fg)" stroke="#6a7ca8" stroke-width="0.8"/><path d="M4.8 0.5 V2.7 H7" fill="none" stroke="#6a7ca8" stroke-width="0.6"/></svg><div class="a t" style="left:54.4px;top:321.14px;font-size:7px;letter-spacing:-0.2px;color:#0a0a0a;-webkit-text-stroke:0.05px #0a0a0a">stm32f4xx_hal_pwr_ex.c</div><svg class="a" style="left:42px;top:319.44px" width="7.5" height="9.5" viewBox="0 0 7.5 9.5"><path d="M0.5 0.5 H4.8 L7 2.7 V9 H0.5Z" fill="url(#fg)" stroke="#6a7ca8" stroke-width="0.8"/><path d="M4.8 0.5 V2.7 H7" fill="none" stroke="#6a7ca8" stroke-width="0.6"/></svg><div class="a t" style="left:54.4px;top:332.46px;font-size:7px;letter-spacing:-0.2px;color:#0a0a0a;-webkit-text-stroke:0.05px #0a0a0a">stm32f4xx_hal_cortex.c</div><svg class="a" style="left:42px;top:330.76px" width="7.5" height="9.5" viewBox="0 0 7.5 9.5"><path d="M0.5 0.5 H4.8 L7 2.7 V9 H0.5Z" fill="url(#fg)" stroke="#6a7ca8" stroke-width="0.8"/><path d="M4.8 0.5 V2.7 H7" fill="none" stroke="#6a7ca8" stroke-width="0.6"/></svg><div class="a t" style="left:54.4px;top:343.78px;font-size:7px;letter-spacing:-0.2px;color:#0a0a0a;-webkit-text-stroke:0.05px #0a0a0a">stm32f4xx_hal.c</div><svg class="a" style="left:42px;top:342.08px" width="7.5" height="9.5" viewBox="0 0 7.5 9.5"><path d="M0.5 0.5 H4.8 L7 2.7 V9 H0.5Z" fill="url(#fg)" stroke="#6a7ca8" stroke-width="0.8"/><path d="M4.8 0.5 V2.7 H7" fill="none" stroke="#6a7ca8" stroke-width="0.6"/></svg><div class="a t" style="left:54.4px;top:355.1px;font-size:7px;letter-spacing:-0.2px;color:#0a0a0a;-webkit-text-stroke:0.05px #0a0a0a">stm32f4xx_hal_exti.c</div><svg class="a" style="left:42px;top:353.4px" width="7.5" height="9.5" viewBox="0 0 7.5 9.5"><path d="M0.5 0.5 H4.8 L7 2.7 V9 H0.5Z" fill="url(#fg)" stroke="#6a7ca8" stroke-width="0.8"/><path d="M4.8 0.5 V2.7 H7" fill="none" stroke="#6a7ca8" stroke-width="0.6"/></svg><div class="a t" style="left:42.6px;top:366.42px;font-size:7px;letter-spacing:-0.2px;color:#0a0a0a;-webkit-text-stroke:0.05px #0a0a0a">Drivers/CMSIS</div><svg class="a" style="left:21.4px;top:366.52px" width="6" height="6" viewBox="0 0 6 6"><rect x="0.4" y="0.4" width="5.2" height="5.2" rx="0.8" fill="#fbfbfb" stroke="#a8a8a8" stroke-width="0.7"/><path d="M1.6 3 H4.4" stroke="#4a62a8" stroke-width="0.8"/></svg><svg class="a" style="left:30px;top:365.72px" width="9.5" height="7.5" viewBox="0 0 9.5 7.5"><path d="M0.5 1 H3.5 L4.3 2 H7.5 V7 H0.5Z" fill="#d8a828" stroke="#b8901c" stroke-width="0.5"/><path d="M2 3.3 H9.3 L7.8 7 H0.5Z" fill="#f8d060"/></svg><div class="a t" style="left:54.4px;top:377.74px;font-size:7px;letter-spacing:-0.2px;color:#0a0a0a;-webkit-text-stroke:0.05px #0a0a0a">system_stm32f4xx.c</div><svg class="a" style="left:42px;top:376.04px" width="7.5" height="9.5" viewBox="0 0 7.5 9.5"><path d="M0.5 0.5 H4.8 L7 2.7 V9 H0.5Z" fill="url(#fg)" stroke="#6a7ca8" stroke-width="0.8"/><path d="M4.8 0.5 V2.7 H7" fill="none" stroke="#6a7ca8" stroke-width="0.6"/></svg><div class="a t" style="left:42.6px;top:389.06px;font-size:7px;letter-spacing:-0.2px;color:#0a0a0a;-webkit-text-stroke:0.05px #0a0a0a">CMSIS</div><svg class="a" style="left:29.5px;top:387.66px" width="8.5" height="9" viewBox="0 0 8.5 9"><path d="M4.2 0.5 L8 4.5 L4.2 8.5 L0.4 4.5Z" fill="#10c020" stroke="#086010" stroke-width="0.5"/><circle cx="4.2" cy="2.8" r="0.6" fill="#042"/><circle cx="4.2" cy="6.2" r="0.6" fill="#042"/><circle cx="2.5" cy="4.5" r="0.6" fill="#042"/><circle cx="5.9" cy="4.5" r="0.6" fill="#042"/></svg><div class="a" style="left:0px;top:467.2px;width:160px;height:9.6px;background:#f0f0f0"></div><div class="a" style="left:4.3px;top:467.5px;width:127.7px;height:9px;background:#e8e8e8;border-right:0.8px solid #d0d0d0"></div><div class="a" style="left:0px;top:476.2px;width:160px;height:0.9px;background:#8c8c8c"></div><div class="a" style="left:4.2px;top:467.5px;width:0.8px;height:9px;background:#777"></div><div class="a" style="left:149.6px;top:467.5px;width:0.6px;height:9px;background:#e0e0e0"></div><svg class="a" style="left:152.5px;top:469.5px" width="5" height="5" viewBox="0 0 5 5"><path d="M1 0.5 L3.8 2.5 L1 4.5Z" fill="#111"/></svg><div class="a" style="left:159.3px;top:467.2px;width:0.9px;height:10px;background:#8a8a8a"></div><div class="a" style="left:0px;top:477.1px;width:160.5px;height:13.5px;background:#fdfdfd"></div><div class="a" style="left:0px;top:477.1px;width:32.2px;height:13.6px;background:#f0f0f0;border-right:1px solid #5a5a5a;border-bottom:1px solid #5a5a5a;border-bottom-right-radius:1.5px"></div><svg class="a" style="left:0px;top:480.5px" width="6" height="6" viewBox="0 0 6 6"><rect x="-2" y="0.5" width="7.5" height="5.5" fill="#c8d040" stroke="#3a6ab8" stroke-width="0.7"/></svg><div class="a t" style="left:7.5px;top:480.4px;font-size:7px;color:#111;letter-spacing:-0.1px">Project</div><svg class="a" style="left:33.5px;top:479.2px" width="10" height="10" viewBox="0 0 10 10"><path d="M4.5 0.5 L8.5 2.5 V7 L4.5 9.3 L0.5 7 V2.5Z" fill="#8a5ae0"/><circle cx="5" cy="6" r="2.2" fill="#5a8ae8" stroke="#fff" stroke-width="0.5"/></svg><div class="a t" style="left:44px;top:480.4px;font-size:7px;color:#a4a4a4;letter-spacing:-0.1px">Books</div><div class="a" style="left:65.5px;top:479px;width:0.8px;height:9px;background:#d8d8d8"></div><div class="a t" style="left:69.8px;top:478.2px;font-size:8px;color:#333;letter-spacing:0.3px">{}</div><div class="a t" style="left:79px;top:480.4px;font-size:7px;color:#a4a4a4;letter-spacing:-0.2px">Functions</div><div class="a" style="left:111px;top:479px;width:0.8px;height:9px;background:#d8d8d8"></div><div class="a t" style="left:113.8px;top:478.2px;font-size:8px;color:#333;letter-spacing:-1px">{}</div><svg class="a" style="left:118.5px;top:484px" width="4.5" height="4.5" viewBox="0 0 4.5 4.5"><path d="M0.5 2.2 H3.5 M2 0.7 L3.8 2.2 L2 3.7" stroke="#2a6ad0" stroke-width="1" fill="none"/></svg><div class="a t" style="left:124px;top:480.4px;font-size:7px;color:#a4a4a4;letter-spacing:-0.25px">Templates</div><div class="a" style="left:157.5px;top:479px;width:0.8px;height:9px;background:#d8d8d8"></div><div class="a" style="left:160.6px;top:57.5px;width:2.5px;height:436px;background:#fff"></div><div class="a" style="left:163px;top:57px;width:917px;height:433.5px;background:#f0f0f0"></div><div class="a" style="left:163px;top:57px;width:2.2px;height:433.5px;background:#bccadf"></div><div class="a" style="left:163px;top:489.6px;width:917px;height:1.2px;background:#b9c6dc"></div><div class="a" style="left:1077.3px;top:72px;width:2.7px;height:418.5px;background:#d6e0ee"></div><div class="a" style="left:164.3px;top:57.3px;width:915.7px;height:14.9px;background:#f5f5f5"></div><div class="a" style="left:164.3px;top:57.3px;width:915.7px;height:0.8px;background:#e4e4e4"></div><div class="a" style="left:216px;top:71.2px;width:864px;height:0.9px;background:#c8d6ec"></div><div class="a" style="left:164.3px;top:59.6px;width:52px;height:12.6px;background:#c9daf4;clip-path:polygon(14px 0,100% 0,100% 100%,0 100%)"></div><svg class="a" style="left:179px;top:60.5px" width="7" height="9" viewBox="0 0 7 9"><path d="M0.5 0.5 H4 L6 2.5 V8.3 H0.5Z" fill="#f4f6fb" stroke="#6a7ca8" stroke-width="0.7"/></svg><div class="a t" style="left:191.3px;top:61.6px;font-size:6.8px;font-weight:bold;color:#1a1a1a;letter-spacing:-0.1px">main.c</div><svg class="a" style="left:1058.8px;top:62.8px" width="6" height="4" viewBox="0 0 6 4"><path d="M0.3 0.3 H5.3 L2.8 3.3Z" fill="#1a1a1a"/></svg><svg class="a" style="left:1069.5px;top:61.3px" width="6.5" height="6.5" viewBox="0 0 6.5 6.5"><path d="M1 1 L5.2 5.2 M5.2 1 L1 5.2" stroke="#1a1a1a" stroke-width="1"/></svg><div class="a" style="left:165px;top:72px;width:912.3px;height:1px;background:#6e6e6e"></div><div class="a" style="left:165px;top:72px;width:1px;height:418px;background:#8a8a8a"></div><div class="a" style="left:166px;top:73px;width:41px;height:405.5px;background:#e6e6e6"></div><div class="a" style="left:206.8px;top:73px;width:8.8px;height:405.5px;background:#fafafa"></div><div class="a" style="left:215.4px;top:73px;width:852.3px;height:405.5px;background:#000"></div><div class="a" style="left:215.4px;top:73.1px;width:852.3px;height:10.8px;background:#262626"></div><svg class="a" style="left:207.8px;top:85.8px" width="7" height="7" viewBox="0 0 7 7"><rect x="0.5" y="0.5" width="5.6" height="5.6" fill="#fff" stroke="#9a9a9a" stroke-width="0.8"/><path d="M1.6 3.3 H5" stroke="#8a8a8a" stroke-width="0.7"/></svg><div class="a" style="left:211px;top:92.2px;width:0.9px;height:158.3px;background:#9a9a9a"></div><div class="a" style="left:211px;top:249.8px;width:3.5px;height:0.9px;background:#9a9a9a"></div><div class="a" style="left:1071.8px;top:81.7px;width:1px;height:78px;background:#8a8a8a"></div><div class="a" style="left:175.5px;top:483.1px;width:662px;height:1px;background:#8c8c8c"></div><div class="a" style="left:166px;top:72px;width:40px;height:406.5px;overflow:hidden"><div class="ln" style="top:1.90px">1</div><div class="ln" style="top:12.65px">2</div><div class="ln" style="top:23.40px">3</div><div class="ln" style="top:34.15px">4</div><div class="ln" style="top:44.90px">5</div><div class="ln" style="top:55.65px">6</div><div class="ln" style="top:66.40px">7</div><div class="ln" style="top:77.15px">8</div><div class="ln" style="top:87.90px">9</div><div class="ln" style="top:98.65px">10</div><div class="ln" style="top:109.40px">11</div><div class="ln" style="top:120.15px">12</div><div class="ln" style="top:130.90px">13</div><div class="ln" style="top:141.65px">14</div><div class="ln" style="top:152.40px">15</div><div class="ln" style="top:163.15px">16</div><div class="ln" style="top:173.90px">17</div><div class="ln" style="top:184.65px">18</div><div class="ln" style="top:195.40px">19</div><div class="ln" style="top:206.15px">20</div><div class="ln" style="top:216.90px">21</div><div class="ln" style="top:227.65px">22</div><div class="ln" style="top:238.40px">23</div><div class="ln" style="top:249.15px">24</div><div class="ln" style="top:259.90px">25</div><div class="ln" style="top:270.65px">26</div><div class="ln" style="top:281.40px">27</div><div class="ln" style="top:292.15px">28</div><div class="ln" style="top:302.90px">29</div><div class="ln" style="top:313.65px">30</div><div class="ln" style="top:324.40px">31</div><div class="ln" style="top:335.15px">32</div><div class="ln" style="top:345.90px">33</div><div class="ln" style="top:356.65px">34</div><div class="ln" style="top:367.40px">35</div><div class="ln" style="top:378.15px">36</div><div class="ln" style="top:388.90px">37</div><div class="ln" style="top:399.65px">38</div></div><div class="a" style="left:215.6px;top:72px;width:852px;height:406.5px;overflow:hidden"><div class="cl" style="top:0.70px"><span class="c">/</span><span class="star">*</span><span class="dot">·</span><span class="c">USER</span><span class="dot">·</span><span class="c">CODE</span><span class="dot">·</span><span class="c">BEGIN</span><span class="dot">·</span><span class="c">Header</span><span class="dot">·</span><span class="star">*</span><span class="c">/</span></div><div class="cl" style="top:11.45px"><span class="c">/</span><span class="star">**</span></div><div class="cl" style="top:22.20px"><span class="dot">··</span><span class="star">******************************************************************************</span></div><div class="cl" style="top:32.95px"><span class="dot">··</span><span class="star">*</span><span class="dot">·</span><span class="tag">@file</span><span class="dot">···········</span><span class="c">:</span><span class="dot">·</span><span class="c">main.c</span></div><div class="cl" style="top:43.70px"><span class="dot">··</span><span class="star">*</span><span class="dot">·</span><span class="tag">@brief</span><span class="dot">··········</span><span class="c">:</span><span class="dot">·</span><span class="c">Main</span><span class="dot">·</span><span class="c">program</span><span class="dot">·</span><span class="c">body</span></div><div class="cl" style="top:54.45px"><span class="dot">··</span><span class="star">******************************************************************************</span></div><div class="cl" style="top:65.20px"><span class="dot">··</span><span class="star">*</span><span class="dot">·</span><span class="tag">@attention</span></div><div class="cl" style="top:75.95px"><span class="dot">··</span><span class="star">*</span></div><div class="cl" style="top:86.70px"><span class="dot">··</span><span class="star">*</span><span class="dot">·</span><span class="c">Copyright</span><span class="dot">·</span><span class="c">(c)</span><span class="dot">·</span><span class="c">2025</span><span class="dot">·</span><span class="c">STMicroelectronics.</span></div><div class="cl" style="top:97.45px"><span class="dot">··</span><span class="star">*</span><span class="dot">·</span><span class="c">All</span><span class="dot">·</span><span class="c">rights</span><span class="dot">·</span><span class="c">reserved.</span></div><div class="cl" style="top:108.20px"><span class="dot">··</span><span class="star">*</span></div><div class="cl" style="top:118.95px"><span class="dot">··</span><span class="star">*</span><span class="dot">·</span><span class="c">This</span><span class="dot">·</span><span class="c">software</span><span class="dot">·</span><span class="c">is</span><span class="dot">·</span><span class="c">licensed</span><span class="dot">·</span><span class="c">under</span><span class="dot">·</span><span class="c">terms</span><span class="dot">·</span><span class="c">that</span><span class="dot">·</span><span class="c">can</span><span class="dot">·</span><span class="c">be</span><span class="dot">·</span><span class="c">found</span><span class="dot">·</span><span class="c">in</span><span class="dot">·</span><span class="c">the</span><span class="dot">·</span><span class="c">LICENSE</span><span class="dot">·</span><span class="c">file</span></div><div class="cl" style="top:129.70px"><span class="dot">··</span><span class="star">*</span><span class="dot">·</span><span class="c">in</span><span class="dot">·</span><span class="c">the</span><span class="dot">·</span><span class="c">root</span><span class="dot">·</span><span class="c">directory</span><span class="dot">·</span><span class="c">of</span><span class="dot">·</span><span class="c">this</span><span class="dot">·</span><span class="c">software</span><span class="dot">·</span><span class="c">component.</span></div><div class="cl" style="top:140.45px"><span class="dot">··</span><span class="star">*</span><span class="dot">·</span><span class="c">If</span><span class="dot">·</span><span class="c">no</span><span class="dot">·</span><span class="c">LICENSE</span><span class="dot">·</span><span class="c">file</span><span class="dot">·</span><span class="c">comes</span><span class="dot">·</span><span class="c">with</span><span class="dot">·</span><span class="c">this</span><span class="dot">·</span><span class="c">software,</span><span class="dot">·</span><span class="c">it</span><span class="dot">·</span><span class="c">is</span><span class="dot">·</span><span class="c">provided</span><span class="dot">·</span><span class="c">AS-IS.</span></div><div class="cl" style="top:151.20px"><span class="dot">··</span><span class="star">*</span></div><div class="cl" style="top:161.95px"><span class="dot">··</span><span class="star">******************************************************************************</span></div><div class="cl" style="top:172.70px"><span class="dot">··</span><span class="star">*</span><span class="c">/</span></div><div class="cl" style="top:183.45px"><span class="c">/</span><span class="star">*</span><span class="dot">·</span><span class="c">USER</span><span class="dot">·</span><span class="c">CODE</span><span class="dot">·</span><span class="c">END</span><span class="dot">·</span><span class="c">Header</span><span class="dot">·</span><span class="star">*</span><span class="c">/</span></div><div class="cl" style="top:194.20px"><span class="c">/</span><span class="star">*</span><span class="dot">·</span><span class="c">Includes</span><span class="dot">·</span><span class="dash" style="width:373.56px"></span><span class="star">*</span><span class="c">/</span></div><div class="cl" style="top:204.95px"><span class="pp">#include</span><span class="dotg">·</span><span class="str">”main.h”</span></div><div class="cl" style="top:215.70px"><span class="pp">#include</span><span class="dotg">·</span><span class="str">”usart.h”</span></div><div class="cl" style="top:226.45px"><span class="pp">#include</span><span class="dotg">·</span><span class="str">”gpio.h”</span></div><div class="cl" style="top:247.95px"><span class="c">/</span><span class="star">*</span><span class="dot">·</span><span class="c">Private</span><span class="dot">·</span><span class="c">includes</span><span class="dot">·</span><span class="dash" style="width:328.28px"></span><span class="star">*</span><span class="c">/</span></div><div class="cl" style="top:258.70px"><span class="c">/</span><span class="star">*</span><span class="dot">·</span><span class="c">USER</span><span class="dot">·</span><span class="c">CODE</span><span class="dot">·</span><span class="c">BEGIN</span><span class="dot">·</span><span class="c">Includes</span><span class="dot">·</span><span class="star">*</span><span class="c">/</span></div><div class="cl" style="top:280.20px"><span class="c">/</span><span class="star">*</span><span class="dot">·</span><span class="c">USER</span><span class="dot">·</span><span class="c">CODE</span><span class="dot">·</span><span class="c">END</span><span class="dot">·</span><span class="c">Includes</span><span class="dot">·</span><span class="star">*</span><span class="c">/</span></div><div class="cl" style="top:301.70px"><span class="c">/</span><span class="star">*</span><span class="dot">·</span><span class="c">Private</span><span class="dot">·</span><span class="c">typedef</span><span class="dot">·</span><span class="dash" style="width:333.94px"></span><span class="star">*</span><span class="c">/</span></div><div class="cl" style="top:312.45px"><span class="c">/</span><span class="star">*</span><span class="dot">·</span><span class="c">USER</span><span class="dot">·</span><span class="c">CODE</span><span class="dot">·</span><span class="c">BEGIN</span><span class="dot">·</span><span class="c">PTD</span><span class="dot">·</span><span class="star">*</span><span class="c">/</span></div><div class="cl" style="top:333.95px"><span class="c">/</span><span class="star">*</span><span class="dot">·</span><span class="c">USER</span><span class="dot">·</span><span class="c">CODE</span><span class="dot">·</span><span class="c">END</span><span class="dot">·</span><span class="c">PTD</span><span class="dot">·</span><span class="star">*</span><span class="c">/</span></div><div class="cl" style="top:355.45px"><span class="c">/</span><span class="star">*</span><span class="dot">·</span><span class="c">Private</span><span class="dot">·</span><span class="c">define</span><span class="dot">·</span><span class="dash" style="width:339.60px"></span><span class="star">*</span><span class="c">/</span></div><div class="cl" style="top:366.20px"><span class="c">/</span><span class="star">*</span><span class="dot">·</span><span class="c">USER</span><span class="dot">·</span><span class="c">CODE</span><span class="dot">·</span><span class="c">BEGIN</span><span class="dot">·</span><span class="c">PD</span><span class="dot">·</span><span class="star">*</span><span class="c">/</span></div><div class="cl" style="top:387.70px"><span class="c">/</span><span class="star">*</span><span class="dot">·</span><span class="c">USER</span><span class="dot">·</span><span class="c">CODE</span><span class="dot">·</span><span class="c">END</span><span class="dot">·</span><span class="c">PD</span><span class="dot">·</span><span class="star">*</span><span class="c">/</span></div></div><div class="a" style="left:0px;top:490.7px;width:1080px;height:2.5px;background:#fff"></div><div class="a" style="left:0px;top:493.2px;width:1080px;height:11.8px;background:linear-gradient(#c8d4e2,#d8e3ef)"></div><div class="a" style="left:0px;top:504.8px;width:1080px;height:1.2px;background:#6a6a6a"></div><div class="a t" style="left:-4.6px;top:496.3px;font-size:7.2px;color:#1a1a1a">Build Output</div><svg class="a" style="left:1060.5px;top:496px" width="5" height="6.5" viewBox="0 0 5 6.5"><rect x="1" y="0.5" width="3" height="3.5" fill="#222"/><path d="M0.3 4.2 H4.7 M2.5 4.2 V6.3" stroke="#222" stroke-width="0.8"/></svg><div class="a" style="left:1071.4px;top:495.8px;width:6.4px;height:6.3px;background:#d84848;border:0.5px solid #c84040"></div><svg class="a" style="left:1071.4px;top:495.8px" width="6.4" height="6.3" viewBox="0 0 6.4 6.3"><path d="M2 2 L4.4 4.3 M4.4 2 L2 4.3" stroke="#fff" stroke-width="0.8"/></svg><div class="a" style="left:0px;top:505.7px;width:1069.6px;height:57.5px;background:#fff"></div><div class="a" style="left:1069.6px;top:505.7px;width:10.4px;height:57.5px;background:#f0f0f0"></div><svg class="a" style="left:1071.5px;top:508.5px" width="6" height="5" viewBox="0 0 6 5"><path d="M0.2 4.2 L3 0.6 L5.8 4.2Z" fill="#a8a8a8"/></svg><svg class="a" style="left:1071.5px;top:555px" width="6" height="5" viewBox="0 0 6 5"><path d="M0.2 0.6 L3 4.2 L5.8 0.6Z" fill="#a8a8a8"/></svg><div class="a" style="left:0px;top:563px;width:1080px;height:10px;background:#efefef"></div><svg class="a" style="left:1063px;top:564.3px" width="5" height="6" viewBox="0 0 5 6"><path d="M0.6 0.3 L4.2 3 L0.6 5.7Z" fill="#a8a8a8"/></svg><div class="a" style="left:0px;top:573px;width:1080px;height:1px;background:#e0e0e0"></div><div class="a" style="left:0px;top:565px;width:1.2px;height:5px;background:#8a8a8a"></div><div class="a" style="left:0px;top:574px;width:1080px;height:10px;background:#efefef"></div><div class="a" style="left:764.4px;top:574.4px;width:0.8px;height:9.6px;background:#e0e0e0"></div><div class="a" style="left:865.6px;top:574.4px;width:0.8px;height:9.6px;background:#e0e0e0"></div><div class="a" style="left:942.2px;top:574.4px;width:0.8px;height:9.6px;background:#e0e0e0"></div><div class="a" style="left:996.3px;top:574.4px;width:0.8px;height:9.6px;background:#e0e0e0"></div><div class="a" style="left:1010.7px;top:574.4px;width:0.8px;height:9.6px;background:#e0e0e0"></div><div class="a" style="left:1029.2px;top:574.4px;width:0.8px;height:9.6px;background:#e0e0e0"></div><div class="a" style="left:1045.9px;top:574.4px;width:0.8px;height:9.6px;background:#e0e0e0"></div><div class="a" style="left:1062.5px;top:574.4px;width:0.8px;height:9.6px;background:#e0e0e0"></div><div class="a t" style="left:767px;top:575.6px;font-size:6.6px;color:#1a1a1a;letter-spacing:-0.05px">ST-Link Debugger</div><div class="a t" style="left:945.6px;top:575.6px;font-size:6.6px;color:#1a1a1a;letter-spacing:-0.05px">L:1 C:1</div><div class="a t" style="left:998px;top:575.6px;font-size:6px;color:#8a8a8a;letter-spacing:-0.05px">CAP</div><div class="a t" style="left:1012.6px;top:575.6px;font-size:6px;color:#8a8a8a;letter-spacing:-0.05px">NUM</div><div class="a t" style="left:1031px;top:575.6px;font-size:6px;color:#8a8a8a;letter-spacing:-0.05px">SCRL</div><div class="a t" style="left:1048px;top:575.6px;font-size:6px;color:#8a8a8a;letter-spacing:-0.05px">OVR</div><div class="a t" style="left:1064px;top:575.6px;font-size:6px;color:#8a8a8a;letter-spacing:-0.05px">R /W</div></body></html>
